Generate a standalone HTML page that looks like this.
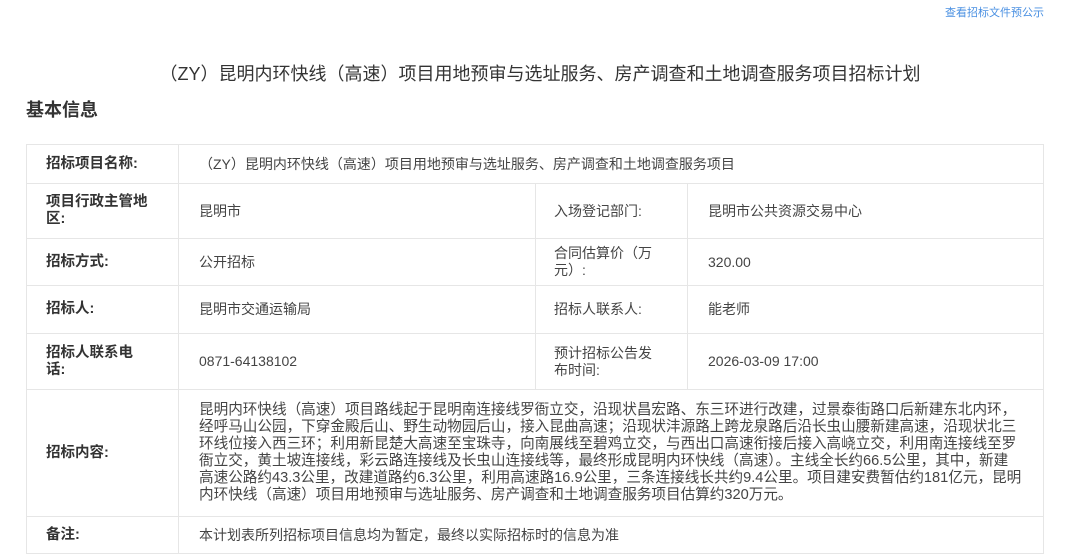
<!DOCTYPE html>
<html><head><meta charset="utf-8"><style>
*{margin:0;padding:0;box-sizing:border-box}
body{width:1080px;height:551px;overflow:hidden;background:#fff;font-family:"Liberation Sans","Noto Sans CJK SC",sans-serif;color:#333;position:relative}
.a{position:absolute}
.link{left:945px;top:4px;font-size:11px;color:#4a90e2}
.title{left:0;width:1080px;top:60px;text-align:center;font-size:18px;color:#333}
.h{left:26px;top:96px;font-size:18px;font-weight:bold;color:#333}
.c{position:absolute;border:1px solid #e6e6e6;display:flex;align-items:center;font-size:14px;color:#444;line-height:17px}
.l{font-weight:bold;color:#333;padding-left:19px;font-size:14.5px}
.v{padding-left:20px}
.m{padding-left:18px}
</style></head><body>
<div class="a link">查看招标文件预公示</div>
<div class="a title">（ZY）昆明内环快线（高速）项目用地预审与选址服务、房产调查和土地调查服务项目招标计划</div>
<div class="a h">基本信息</div>

<div class="c l" style="left:26px;top:144px;width:153px;height:40px">招标项目名称:</div>
<div class="c v" style="left:178px;top:144px;width:866px;height:40px">（ZY）昆明内环快线（高速）项目用地预审与选址服务、房产调查和土地调查服务项目</div>

<div class="c l" style="left:26px;top:183px;width:153px;height:56px">项目行政主管地<br>区:</div>
<div class="c v" style="left:178px;top:183px;width:358px;height:56px">昆明市</div>
<div class="c m" style="left:535px;top:183px;width:153px;height:56px">入场登记部门:</div>
<div class="c v" style="left:687px;top:183px;width:357px;height:56px">昆明市公共资源交易中心</div>

<div class="c l" style="left:26px;top:238px;width:153px;height:48px">招标方式:</div>
<div class="c v" style="left:178px;top:238px;width:358px;height:48px">公开招标</div>
<div class="c m" style="left:535px;top:238px;width:153px;height:48px">合同估算价（万<br>元）:</div>
<div class="c v" style="left:687px;top:238px;width:357px;height:48px">320.00</div>

<div class="c l" style="left:26px;top:285px;width:153px;height:49px">招标人:</div>
<div class="c v" style="left:178px;top:285px;width:358px;height:49px">昆明市交通运输局</div>
<div class="c m" style="left:535px;top:285px;width:153px;height:49px">招标人联系人:</div>
<div class="c v" style="left:687px;top:285px;width:357px;height:49px">能老师</div>

<div class="c l" style="left:26px;top:333px;width:153px;height:57px">招标人联系电<br>话:</div>
<div class="c v" style="left:178px;top:333px;width:358px;height:57px">0871-64138102</div>
<div class="c m" style="left:535px;top:333px;width:153px;height:57px">预计招标公告发<br>布时间:</div>
<div class="c v" style="left:687px;top:333px;width:357px;height:57px">2026-03-09 17:00</div>

<div class="c l" style="left:26px;top:389px;width:153px;height:128px">招标内容:</div>
<div class="c v" style="left:178px;top:389px;width:866px;height:128px;font-size:14.6px;white-space:nowrap">昆明内环快线（高速）项目路线起于昆明南连接线罗衙立交，沿现状昌宏路、东三环进行改建，过景泰街路口后新建东北内环，<br>经呼马山公园，下穿金殿后山、野生动物园后山，接入昆曲高速；沿现状沣源路上跨龙泉路后沿长虫山腰新建高速，沿现状北三<br>环线位接入西三环；利用新昆楚大高速至宝珠寺，向南展线至碧鸡立交，与西出口高速衔接后接入高峣立交，利用南连接线至罗<br>衙立交，黄土坡连接线，彩云路连接线及长虫山连接线等，最终形成昆明内环快线（高速）。主线全长约66.5公里，其中，新建<br>高速公路约43.3公里，改建道路约6.3公里，利用高速路16.9公里，三条连接线长共约9.4公里。项目建安费暂估约181亿元，昆明<br>内环快线（高速）项目用地预审与选址服务、房产调查和土地调查服务项目估算约320万元。</div>

<div class="c l" style="left:26px;top:516px;width:153px;height:38px">备注:</div>
<div class="c v" style="left:178px;top:516px;width:866px;height:38px">本计划表所列招标项目信息均为暂定，最终以实际招标时的信息为准</div>
</body></html>
